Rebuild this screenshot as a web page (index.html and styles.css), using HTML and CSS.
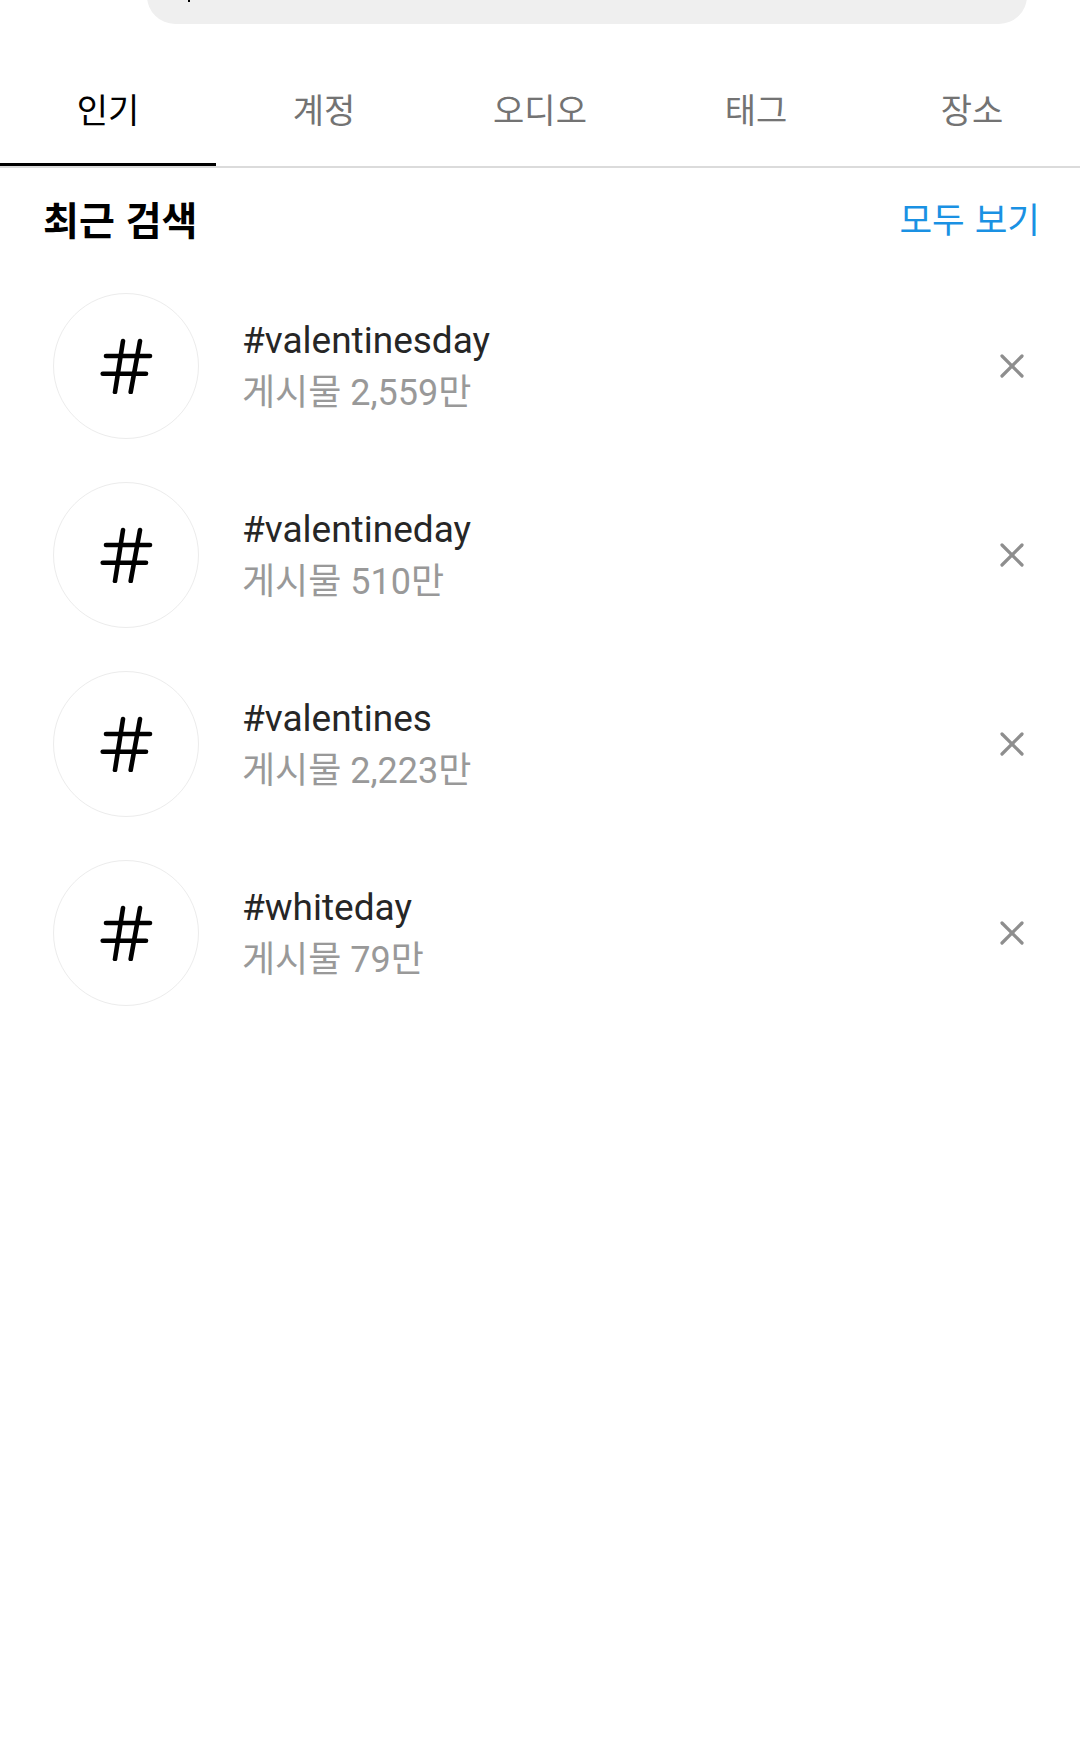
FILE: index.html
```html
<!DOCTYPE html>
<html lang="ko">
<head>
<meta charset="utf-8">
<title>검색</title>
<link rel="stylesheet" href="styles.css">
</head>
<body>
<div class="search-row">
  <div class="search-bar"><span class="cursor"></span></div>
</div>
<nav class="tabs">
  <div class="tab active">인기</div>
  <div class="tab">계정</div>
  <div class="tab">오디오</div>
  <div class="tab">태그</div>
  <div class="tab">장소</div>
</nav>
<div class="recent-head">
  <h2 class="recent-title">최근 검색</h2>
  <a class="see-all">모두 보기</a>
</div>
<ul class="list">
  <li class="row">
    <div class="avatar"><svg class="hash" viewBox="0 0 54 56" width="54" height="56"><g stroke="#000" stroke-width="4.6" stroke-linecap="round" fill="none"><line x1="7" y1="18" x2="51" y2="18"/><line x1="3.7" y1="35.7" x2="47" y2="35.7"/><line x1="24" y1="3" x2="16" y2="54"/><line x1="41" y1="3" x2="31.7" y2="54"/></g></svg></div>
    <div class="info"><div class="tag">#valentinesday</div><div class="count">게시물 2,559만</div></div>
    <svg class="close" viewBox="0 0 24 24" width="24" height="24"><g stroke="#8e8e8e" stroke-width="3.2" stroke-linecap="round"><line x1="2" y1="2" x2="22" y2="22"/><line x1="22" y1="2" x2="2" y2="22"/></g></svg>
  </li>
  <li class="row">
    <div class="avatar"><svg class="hash" viewBox="0 0 54 56" width="54" height="56"><g stroke="#000" stroke-width="4.6" stroke-linecap="round" fill="none"><line x1="7" y1="18" x2="51" y2="18"/><line x1="3.7" y1="35.7" x2="47" y2="35.7"/><line x1="24" y1="3" x2="16" y2="54"/><line x1="41" y1="3" x2="31.7" y2="54"/></g></svg></div>
    <div class="info"><div class="tag">#valentineday</div><div class="count">게시물 510만</div></div>
    <svg class="close" viewBox="0 0 24 24" width="24" height="24"><g stroke="#8e8e8e" stroke-width="3.2" stroke-linecap="round"><line x1="2" y1="2" x2="22" y2="22"/><line x1="22" y1="2" x2="2" y2="22"/></g></svg>
  </li>
  <li class="row">
    <div class="avatar"><svg class="hash" viewBox="0 0 54 56" width="54" height="56"><g stroke="#000" stroke-width="4.6" stroke-linecap="round" fill="none"><line x1="7" y1="18" x2="51" y2="18"/><line x1="3.7" y1="35.7" x2="47" y2="35.7"/><line x1="24" y1="3" x2="16" y2="54"/><line x1="41" y1="3" x2="31.7" y2="54"/></g></svg></div>
    <div class="info"><div class="tag">#valentines</div><div class="count">게시물 2,223만</div></div>
    <svg class="close" viewBox="0 0 24 24" width="24" height="24"><g stroke="#8e8e8e" stroke-width="3.2" stroke-linecap="round"><line x1="2" y1="2" x2="22" y2="22"/><line x1="22" y1="2" x2="2" y2="22"/></g></svg>
  </li>
  <li class="row">
    <div class="avatar"><svg class="hash" viewBox="0 0 54 56" width="54" height="56"><g stroke="#000" stroke-width="4.6" stroke-linecap="round" fill="none"><line x1="7" y1="18" x2="51" y2="18"/><line x1="3.7" y1="35.7" x2="47" y2="35.7"/><line x1="24" y1="3" x2="16" y2="54"/><line x1="41" y1="3" x2="31.7" y2="54"/></g></svg></div>
    <div class="info"><div class="tag">#whiteday</div><div class="count">게시물 79만</div></div>
    <svg class="close" viewBox="0 0 24 24" width="24" height="24"><g stroke="#8e8e8e" stroke-width="3.2" stroke-linecap="round"><line x1="2" y1="2" x2="22" y2="22"/><line x1="22" y1="2" x2="2" y2="22"/></g></svg>
  </li>
</ul>
</body>
</html>
```
FILE: styles.css
```css
* { box-sizing: border-box; }
html, body { margin: 0; padding: 0; background: #fff; }
body {
  width: 1080px;
  height: 1761px;
  overflow: hidden;
  font-family: Roboto, "Noto Sans CJK KR", sans-serif;
  color: #262626;
}
.search-row {
  height: 24px;
  display: flex;
  padding: 0 53px 0 147px;
}
.search-bar {
  flex: 1;
  height: 56px;
  margin-top: -32px;
  background: #efefef;
  border-radius: 28px;
  display: flex;
  align-items: flex-end;
  padding: 0 0 22px 41px;
}
.cursor {
  display: block;
  width: 2px;
  height: 26px;
  background: #000;
}
.tabs {
  margin-top: 27px;
  display: grid;
  grid-template-columns: repeat(5, 1fr);
  border-bottom: 2px solid #dbdbdb;
}
.tab {
  height: 115px;
  display: flex;
  align-items: center;
  justify-content: center;
  font-family: "Noto Sans CJK KR", sans-serif;
  font-size: 34px;
  color: #737373;
}
.tab.active {
  color: #000;
  box-shadow: inset 0 -3px 0 #000;
}
.recent-head {
  height: 103px;
  display: flex;
  align-items: center;
  justify-content: space-between;
  padding: 0 40px 4px 43px;
}
.recent-title {
  margin: 0;
  font-family: "Noto Sans CJK KR", sans-serif;
  font-size: 39px;
  font-weight: 700;
  color: #000;
}
.see-all {
  font-family: "Noto Sans CJK KR", sans-serif;
  font-size: 35.5px;
  color: #1a91e3;
}
.list {
  list-style: none;
  margin: 0;
  padding: 0;
}
.row {
  display: flex;
  align-items: center;
  padding: 22px 56px 21px 53px;
}
.avatar {
  width: 146px;
  height: 146px;
  border-radius: 50%;
  border: 1.5px solid #ececec;
  display: flex;
  align-items: center;
  justify-content: center;
  flex: none;
}
.hash { display: block; }
.info {
  flex: 1;
  margin-left: 43px;
  padding-top: 2px;
}
.tag {
  font-size: 37px;
  line-height: 51px;
  color: #262626;
}
.count {
  margin-top: 2px;
  font-size: 36px;
  line-height: 51px;
  color: #999;
}
.close { display: block; flex: none; }
```
